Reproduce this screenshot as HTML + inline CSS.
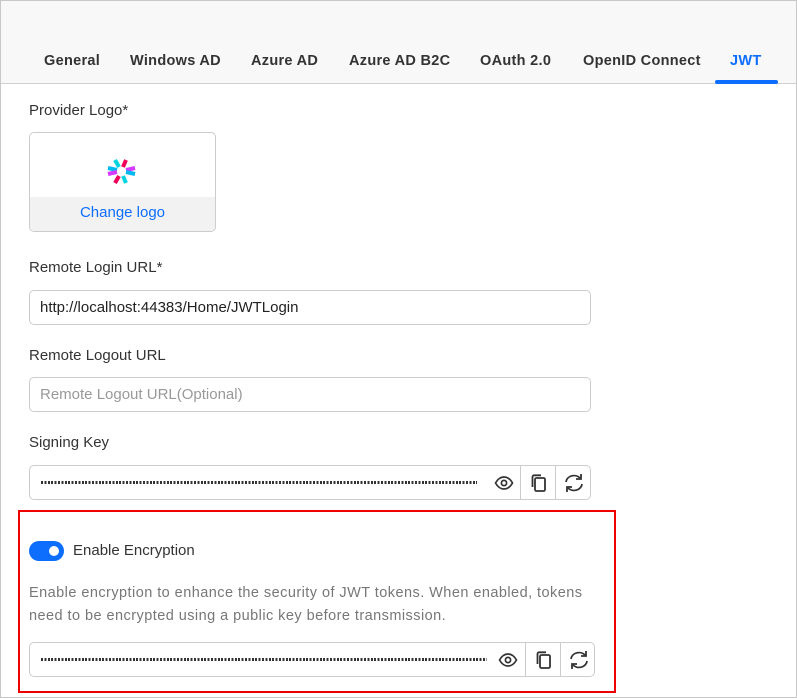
<!DOCTYPE html>
<html><head><style>
*{box-sizing:border-box;margin:0;padding:0}
body{width:797px;height:699px;background:#fff;font-family:"Liberation Sans",Roboto,sans-serif;color:#333;position:relative;overflow:hidden}
.frame{position:absolute;left:0;top:0;width:797px;height:698px;border:1px solid #c8c8c8}
.hdr{position:absolute;left:1px;top:1px;width:795px;height:83px;background:#f8f8f8;border-bottom:1px solid #d0d0d0}
.tab{position:absolute;top:53px;font-size:14.5px;font-weight:bold;color:#333;letter-spacing:.3px}
.ind{position:absolute;left:715px;top:80px;width:63px;height:4px;background:#0d6efd;border-radius:2px}
.lbl{position:absolute;left:29px;font-size:15px;color:#333}
.logo{position:absolute;left:29px;top:132px;width:187px;height:100px;border:1px solid #ccc;border-radius:5px;overflow:hidden}
.logo .bot{position:absolute;left:0;bottom:0;width:100%;height:34px;background:#f2f2f2;color:#0d6efd;font-size:15px;text-align:center;line-height:32px}
.inp{position:absolute;left:29px;width:562px;height:35px;border:1px solid #ccc;border-radius:5px;font-size:15px;line-height:33px;padding-left:10px}
.dots{position:absolute;left:11px;top:15px;height:3px;background:repeating-linear-gradient(90deg,#333 0 2px,transparent 2px 3.4px)}
.btn{position:absolute;top:0;width:35px;height:33px;border-left:1px solid #ccc}
.btn svg{position:absolute;left:7px;top:6px}
.red{position:absolute;left:18px;top:510px;width:598px;height:183px;border:2px solid #e00}
.tog{position:absolute;left:29px;top:541px;width:35px;height:20px;border-radius:10px;background:#0d6efd}
.tog:after{content:"";position:absolute;right:5px;top:5px;width:10px;height:10px;border-radius:50%;background:#fff}
.desc{position:absolute;left:29px;top:582px;width:590px;font-size:14.5px;line-height:23px;color:#777;white-space:nowrap;letter-spacing:.45px}
</style></head><body>
<div class="frame"></div>
<div class="hdr"></div>
<div class="tab" style="left:44px">General</div>
<div class="tab" style="left:130px">Windows AD</div>
<div class="tab" style="left:251px">Azure AD</div>
<div class="tab" style="left:349px">Azure AD B2C</div>
<div class="tab" style="left:480px">OAuth 2.0</div>
<div class="tab" style="left:583px">OpenID Connect</div>
<div class="tab" style="left:730px;color:#0d6efd">JWT</div>
<div class="ind"></div>

<div class="lbl" style="top:102px">Provider Logo*</div>
<div class="logo">
<svg style="position:absolute;left:76px;top:25px" width="32" height="28" viewBox="0 0 32 28">
<g stroke-width="4" stroke-linecap="butt">
<line x1="9" y1="2" x2="13" y2="9" stroke="#00d4e0"/>
<line x1="20" y1="2" x2="17" y2="9" stroke="#f0005a"/>
<line x1="2" y1="10" x2="11" y2="12" stroke="#00b9f1"/>
<line x1="2" y1="16" x2="11" y2="14" stroke="#d63aff"/>
<line x1="29" y1="10" x2="20" y2="12" stroke="#d63aff"/>
<line x1="29" y1="16" x2="20" y2="14" stroke="#00b9f1"/>
<line x1="9" y1="25" x2="13" y2="18" stroke="#f0005a"/>
<line x1="20" y1="25" x2="17" y2="18" stroke="#00d4e0"/>
</g></svg>
<div class="bot">Change logo</div></div>

<div class="lbl" style="top:259px">Remote Login URL*</div>
<div class="inp" style="top:290px;color:#222">http://localhost:44383/Home/JWTLogin</div>
<div class="lbl" style="top:347px">Remote Logout URL</div>
<div class="inp" style="top:377px;color:#999">Remote Logout URL(Optional)</div>
<div class="lbl" style="top:434px">Signing Key</div>
<div class="inp" style="top:465px">
<div class="dots" style="width:436px"></div>
<svg style="position:absolute;left:464px;top:8px" width="20" height="18" viewBox="0 0 20 18"><path d="M1.5 9C4 4.5 7 3 10 3s6 1.5 8.5 6C16 13.5 13 15 10 15S4 13.5 1.5 9z" fill="none" stroke="#333" stroke-width="1.7"/><circle cx="10" cy="9" r="2.6" fill="none" stroke="#333" stroke-width="1.7"/></svg>
<div class="btn" style="left:490px"><svg width="22" height="22" viewBox="0 0 22 22"><rect x="7" y="6" width="10" height="13" rx="1.5" fill="none" stroke="#333" stroke-width="1.8"/><path d="M4.5 15V5c0-1 .7-1.7 1.7-1.7H13" fill="none" stroke="#333" stroke-width="1.8"/></svg></div>
<div class="btn" style="left:525px"><svg width="22" height="22" viewBox="0 0 22 22"><path d="M3 10a8 7 0 0 1 14-4M19 12a8 7 0 0 1-14 4" fill="none" stroke="#333" stroke-width="1.8"/><path d="M18 2v5h-5M4 20v-5h5" fill="none" stroke="#333" stroke-width="1.8"/></svg></div>
</div>

<div class="red"></div>
<div class="tog"></div>
<div class="lbl" style="left:73px;top:542px">Enable Encryption</div>
<div class="desc">Enable encryption to enhance the security of JWT tokens. When enabled, tokens<br>need to be encrypted using a public key before transmission.</div>
<div class="inp" style="top:642px;width:566px">
<div class="dots" style="width:446px"></div>
<svg style="position:absolute;left:468px;top:8px" width="20" height="18" viewBox="0 0 20 18"><path d="M1.5 9C4 4.5 7 3 10 3s6 1.5 8.5 6C16 13.5 13 15 10 15S4 13.5 1.5 9z" fill="none" stroke="#333" stroke-width="1.7"/><circle cx="10" cy="9" r="2.6" fill="none" stroke="#333" stroke-width="1.7"/></svg>
<div class="btn" style="left:495px"><svg width="22" height="22" viewBox="0 0 22 22"><rect x="7" y="6" width="10" height="13" rx="1.5" fill="none" stroke="#333" stroke-width="1.8"/><path d="M4.5 15V5c0-1 .7-1.7 1.7-1.7H13" fill="none" stroke="#333" stroke-width="1.8"/></svg></div>
<div class="btn" style="left:530px"><svg width="22" height="22" viewBox="0 0 22 22"><path d="M3 10a8 7 0 0 1 14-4M19 12a8 7 0 0 1-14 4" fill="none" stroke="#333" stroke-width="1.8"/><path d="M18 2v5h-5M4 20v-5h5" fill="none" stroke="#333" stroke-width="1.8"/></svg></div>
</div>
</body></html>
